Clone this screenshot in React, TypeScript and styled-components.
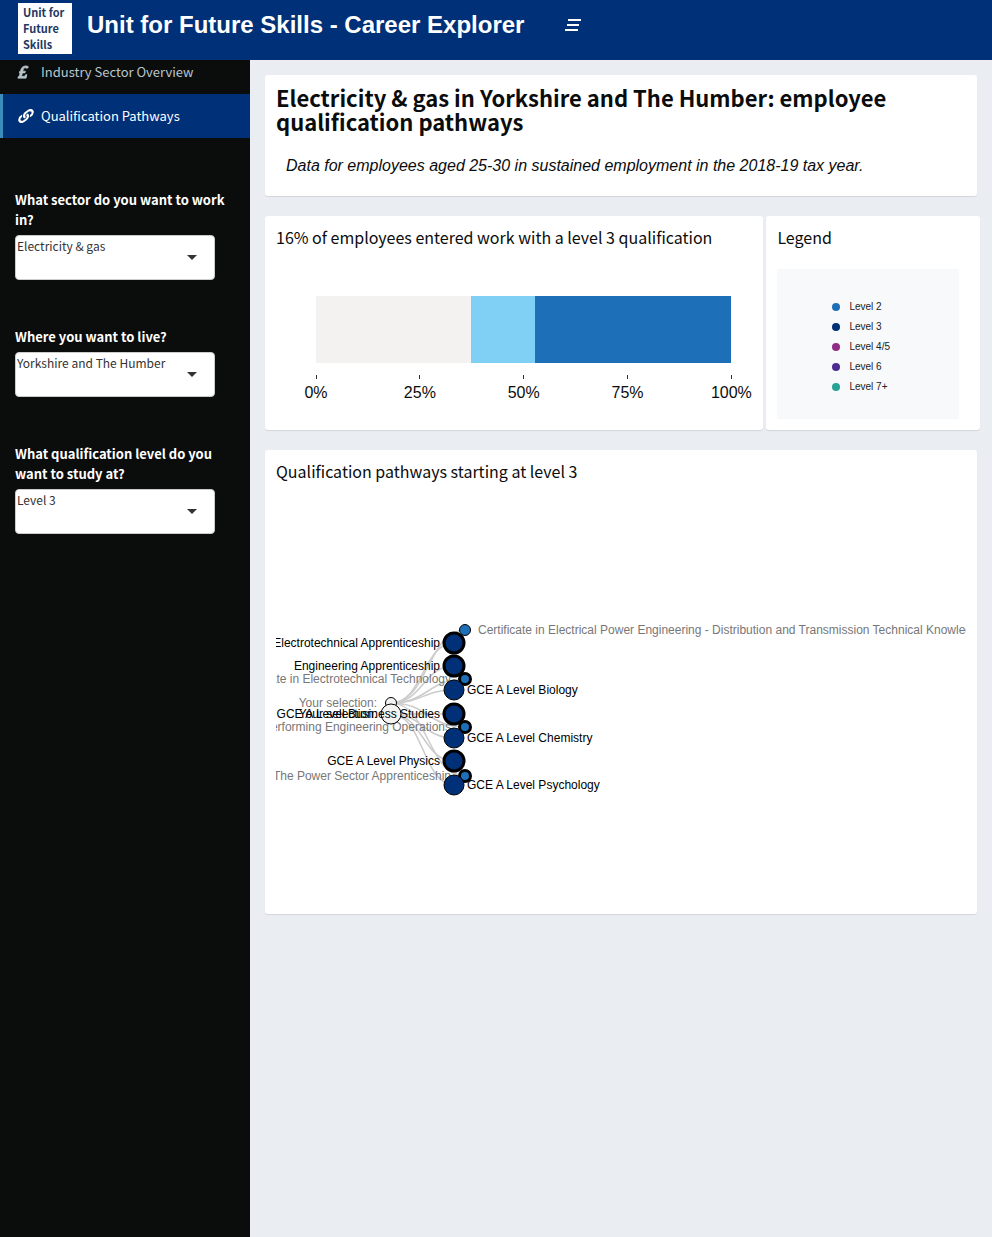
import React from "react";
import styled, { createGlobalStyle } from "styled-components";
import { FaLink, FaPoundSign } from "react-icons/fa";

const sans = `"Noto Sans CJK SC", "Noto Sans", sans-serif`;
const arial = `"Liberation Sans", Arial, sans-serif`;

const GlobalStyle = createGlobalStyle`
  *, *::before, *::after { box-sizing: border-box; }
  body { margin: 0; background: #eaeef3; color: #0b0c0c; font-family: ${sans}; }
`;

const Page = styled.div`
  display: flex;
  flex-direction: column;
  min-height: 100vh;
`;

const Header = styled.header`
  display: flex;
  align-items: flex-start;
  height: 60px;
  padding: 3px 18px;
  background: #003078;
  color: #fff;
  position: relative;
  z-index: 1;
`;

const Logo = styled.a`
  width: 54px;
  height: 51px;
  padding: 1px 5px;
  background: #fff;
  color: #1f3864;
  font-size: 11px;
  font-weight: 700;
  line-height: 16px;
  text-decoration: none;
`;

const Brand = styled.span`
  margin-left: 15px;
  font: 700 24px/44px ${arial};
  white-space: nowrap;
`;

const MenuToggle = styled.button`
  margin-left: 33px;
  padding: 8px;
  border: 0;
  background: none;
  color: inherit;
  svg { display: block; }
`;

const Body = styled.div`
  display: flex;
  flex: 1;
`;

const Sidebar = styled.aside`
  flex: 0 0 250px;
  margin-top: -10px;
  background: #0b0c0c;
`;

const MenuItem = styled.a<{ $active?: boolean }>`
  display: flex;
  align-items: center;
  height: 44px;
  padding-left: 16px;
  border-left: 3px solid ${(p) => (p.$active ? "#3c8dbc" : "transparent")};
  background: ${(p) => (p.$active ? "#003078" : "transparent")};
  color: ${(p) => (p.$active ? "#fff" : "#b8c7ce")};
  font-size: 13px;
  line-height: 20px;
  text-decoration: none;
`;

const MenuIcon = styled.span<{ $width: number }>`
  display: flex;
  flex: 0 0 22px;
  svg {
    width: ${(p) => p.$width}px;
    height: 14px;
    transform: skewX(-14deg);
  }
`;

const Filters = styled.form`
  display: flex;
  flex-direction: column;
  gap: 47px;
  padding: 52px 15px 0;
`;

const Field = styled.div`
  label {
    display: block;
    margin-bottom: 5px;
    color: #fff;
    font-size: 13px;
    font-weight: 700;
    line-height: 20px;
  }
`;

const SelectBox = styled.div`
  position: relative;
  width: 200px;
  select {
    display: block;
    width: 100%;
    height: 45px;
    padding: 0 40px 23px 1px;
    appearance: none;
    border: 1px solid #ccc;
    border-radius: 4px;
    background: #fff;
    color: #333;
    font: 12px/20px ${sans};
  }
  svg {
    position: absolute;
    top: 20px;
    right: 18px;
    pointer-events: none;
  }
`;

const Main = styled.main`
  display: flex;
  flex: 1;
  flex-direction: column;
  gap: 20px;
  min-width: 0;
  padding: 15px;
`;

const Card = styled.section`
  min-width: 0;
  padding: 11px;
  border-radius: 3px;
  background: #fff;
  box-shadow: 0 1px 1px rgba(0, 0, 0, 0.1);
`;

const Row = styled.div`
  display: grid;
  grid-template-columns: 7fr 3fr;
  gap: 3px;
  margin-right: -3px;
`;

const Title = styled.h1`
  margin: -1px 0 23px;
  font-size: 22px;
  font-weight: 700;
  line-height: 24px;
`;

const Note = styled.p`
  margin: 0 10px 9px;
  font: italic 16px/20px ${arial};
`;

const CardTitle = styled.h2`
  margin: 0;
  font-size: 16px;
  font-weight: 400;
  line-height: 20px;
`;

const Chart = styled.div`
  margin: 49px 21px 14px 40px;
`;

const Bar = styled.div`
  display: flex;
  height: 67px;
`;

const Segment = styled.div<{ $share: number; $color: string }>`
  flex: ${(p) => p.$share} 1 0;
  background: ${(p) => p.$color};
`;

const Axis = styled.div`
  display: flex;
  justify-content: space-between;
  margin-top: 12px;
`;

const Tick = styled.span`
  display: flex;
  flex-direction: column;
  align-items: center;
  width: 0;
  font: 16px/18px ${arial};
  &::before {
    content: "";
    width: 1px;
    height: 4px;
    margin-bottom: 5px;
    background: #333;
  }
`;

const Legend = styled.ul`
  display: flex;
  flex-direction: column;
  max-width: 182px;
  height: 150px;
  margin: 22px 0 0;
  padding: 28px 0 0 55px;
  background: #f8f9fb;
  list-style: none;
`;

const LegendItem = styled.li<{ $color: string }>`
  display: flex;
  align-items: center;
  gap: 9px;
  height: 20px;
  color: #222;
  font: 10px/20px ${arial};
  &::before {
    content: "";
    width: 8px;
    height: 8px;
    border-radius: 50%;
    background: ${(p) => p.$color};
  }
`;

const Tree = styled.svg`
  display: block;
  width: 100%;
  height: 399px;
  margin-top: 23px;
  overflow: hidden;
  font: 12px ${arial};
`;

const segments = [
  { share: 37.3, color: "#f3f2f1" },
  { share: 15.5, color: "#80cff4" },
  { share: 47.2, color: "#1d70b8" },
];

const levels = [
  ["Level 2", "#1d70b8"],
  ["Level 3", "#003078"],
  ["Level 4/5", "#912b88"],
  ["Level 6", "#4c2c92"],
  ["Level 7+", "#28a197"],
];

const filters = [
  { id: "sector", label: "What sector do you want to work in?", value: "Electricity & gas" },
  { id: "region", label: "Where you want to live?", value: "Yorkshire and The Humber" },
  { id: "level", label: "What qualification level do you want to study at?", value: "Level 3" },
];

type Node = { y: number; label: string; left?: boolean; thick?: boolean };

const outer: Node[] = [
  { y: 126, label: "Certificate in Electrical Power Engineering - Distribution and Transmission Technical Knowledge" },
  { y: 175, label: "Diploma/Certificate in Electrotechnical Technology", left: true, thick: true },
  { y: 223, label: "Diploma in Performing Engineering Operations", left: true, thick: true },
  { y: 272, label: "Diploma in The Power Sector Apprenticeship", left: true, thick: true },
];

const inner: Node[] = [
  { y: 139, label: "Electrotechnical Apprenticeship", left: true, thick: true },
  { y: 162, label: "Engineering Apprenticeship", left: true, thick: true },
  { y: 186, label: "GCE A Level Biology" },
  { y: 210, label: "GCE A Level Business Studies", left: true, thick: true },
  { y: 234, label: "GCE A Level Chemistry" },
  { y: 257, label: "GCE A Level Physics", left: true, thick: true },
  { y: 281, label: "GCE A Level Psychology" },
];

function PathwayTree() {
  return (
    <Tree role="img" aria-label="Qualification pathways starting at level 3">
      <g fill="none" stroke="#ccc" strokeWidth="1.5">
        {outer.map((n) => (
          <path key={n.y} d={`M115 199C152 199 152 ${n.y} 189 ${n.y}`} />
        ))}
        {inner.map((n) => {
          const from = n.y < 200 ? 199 : 210;
          return <path key={n.y} d={`M115 ${from}C147 ${from} 147 ${n.y} 178 ${n.y}`} />;
        })}
      </g>
      <g stroke="#000">
        <circle cx="115" cy="199" r="5.500" fill="#f3f2f1" />
        {outer.map((n) => (
          <circle key={n.y} cx="189" cy={n.y} r="5.500" fill="#1d70b8" strokeWidth={n.thick ? 3 : 1} />
        ))}
      </g>
      <g fill="#777">
        <text x="101" y="203" textAnchor="end">Your selection:</text>
        {outer.map((n) => (
          <text key={n.y} x={n.left ? 175 : 202} y={n.y + 4} textAnchor={n.left ? "end" : "start"}>{n.label}</text>
        ))}
      </g>
      <g stroke="#000">
        <circle cx="115" cy="210" r="10" fill="#f3f2f1" />
        {inner.map((n) => (
          <circle key={n.y} cx="178" cy={n.y} r="10" fill="#003078" strokeWidth={n.thick ? 3 : 1} />
        ))}
      </g>
      <g fill="#000">
        <text x="101" y="214" textAnchor="end">Your selection:</text>
        {inner.map((n) => (
          <text key={n.y} x={n.left ? 164 : 191} y={n.y + 4} textAnchor={n.left ? "end" : "start"}>{n.label}</text>
        ))}
      </g>
    </Tree>
  );
}

export default function App() {
  return (
    <Page>
      <GlobalStyle />
      <Header>
        <Logo href="#">Unit for Future Skills</Logo>
        <Brand>Unit for Future Skills - Career Explorer</Brand>
        <MenuToggle type="button" aria-label="Toggle navigation">
          <svg width="16" height="27" viewBox="0 0 16 27" stroke="currentColor" strokeWidth="2">
            <path d="M3 9H16M2 14H14M0 19H13" />
          </svg>
        </MenuToggle>
      </Header>
      <Body>
        <Sidebar>
          <nav>
            <MenuItem href="#">
              <MenuIcon $width={9}><FaPoundSign preserveAspectRatio="none" stroke="currentColor" strokeWidth="24" /></MenuIcon>
              Industry Sector Overview
            </MenuItem>
            <MenuItem href="#" $active>
              <MenuIcon $width={14}><FaLink /></MenuIcon>
              Qualification Pathways
            </MenuItem>
          </nav>
          <Filters>
            {filters.map((f) => (
              <Field key={f.id}>
                <label htmlFor={f.id}>{f.label}</label>
                <SelectBox>
                  <select id={f.id}>
                    <option>{f.value}</option>
                  </select>
                  <svg width="10" height="5" viewBox="0 0 10 5" fill="#333">
                    <path d="M0 0H10L5 5Z" />
                  </svg>
                </SelectBox>
              </Field>
            ))}
          </Filters>
        </Sidebar>
        <Main>
          <Card>
            <Title>Electricity &amp; gas in Yorkshire and The Humber: employee qualification pathways</Title>
            <Note>Data for employees aged 25-30 in sustained employment in the 2018-19 tax year.</Note>
          </Card>
          <Row>
            <Card>
              <CardTitle>16% of employees entered work with a level 3 qualification</CardTitle>
              <Chart>
                <Bar>
                  {segments.map((s) => (
                    <Segment key={s.color} $share={s.share} $color={s.color} />
                  ))}
                </Bar>
                <Axis>
                  {["0%", "25%", "50%", "75%", "100%"].map((t) => (
                    <Tick key={t}>{t}</Tick>
                  ))}
                </Axis>
              </Chart>
            </Card>
            <Card>
              <CardTitle>Legend</CardTitle>
              <Legend>
                {levels.map(([name, color]) => (
                  <LegendItem key={name} $color={color}>{name}</LegendItem>
                ))}
              </Legend>
            </Card>
          </Row>
          <Card>
            <CardTitle>Qualification pathways starting at level 3</CardTitle>
            <PathwayTree />
          </Card>
        </Main>
      </Body>
    </Page>
  );
}
